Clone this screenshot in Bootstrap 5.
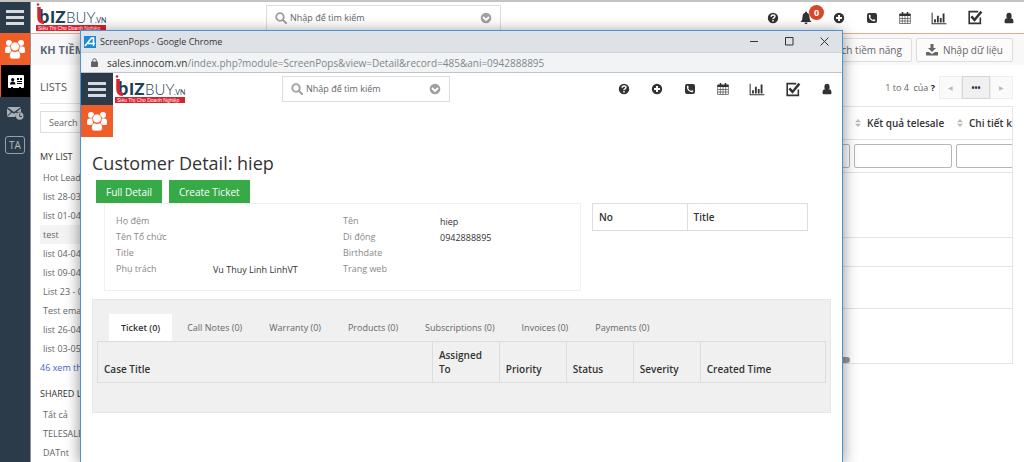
<!DOCTYPE html>
<html lang="vi">
<head>
<meta charset="utf-8">
<meta name="viewport" content="width=device-width, initial-scale=1">
<title>BizBuy CRM</title>
<link href="https://cdn.jsdelivr.net/npm/bootstrap@5.3.0/dist/css/bootstrap.min.css" rel="stylesheet">
<style>
  :root { --navy:#2c3b49; --brand:#ef5e29; --line:#e4e4e4; --ink:#333; --soft:#666; }
  body { font-family:"Open Sans","Noto Sans",sans-serif; font-size:9px; line-height:16px; color:var(--soft); background:#fff; }
  a { color:inherit; text-decoration:none; }
  button { font-family:inherit; }
  svg { display:block; flex:none; }
  .shell { border-top:2px solid #c4c4c4; }

  /* dark icon rail */
  .rail { width:31px; background:var(--navy); border-right:1px solid #8b949b; }
  .tile { height:32px; border:0; padding:0; background:var(--navy); color:#fff; display:flex; align-items:center; justify-content:center; }
  .rail .tile:first-child { height:31px; }
  .tile.is-brand { background:var(--brand); }
  .tile.is-current { background:#000; border-left:1px solid var(--brand); }
  .tile.is-dim { color:#a9b1b8; }
  .ta-box { width:20px; height:18px; border:1px solid #96a0a8; border-radius:3px; line-height:16px; font-size:10px; color:#b6bdc3; text-align:center; }

  /* application bar */
  .appbar { height:32px; }
  .appbar.is-main { border-bottom:1px solid #f5a48a; }
  .logo-slot { width:235px; padding-left:4px; }
  .pop .logo-slot { width:169px; padding-left:1px; }
  .finder { width:235px; height:26px; border:1px solid #ddd; padding:0 8px; color:#a0a0a0; }
  .pop .finder { width:168px; }
  .finder input { font-size:9px; border:0; outline:0; background:none; min-width:0; color:#666; padding:0 0 0 3px; }
  .finder input::placeholder, .list-find::placeholder { color:#666; opacity:1; }
  .tools { gap:19px; color:var(--ink); padding-right:8px; }
  .tools a { position:relative; }
  .count { position:absolute; left:10px; top:-6px; width:15px; height:15px; border-radius:50%; background:#d9472b; color:#fff; font-size:9px; font-weight:700; line-height:15px; text-align:center; }

  .module-bar { height:31px; background:#f8f8f8; padding:0 11px 0 9px; }
  .module-bar h1 { font-size:11px; font-weight:700; color:#5d6b78; margin:0; }
  .act { height:24px; border:1px solid #ddd; border-radius:2px; background:#fbfbfb; color:#666; font-size:10px; line-height:16px; padding:0 9px; gap:5px; }

  /* lists panel */
  .lists { width:208px; padding:0 9px; flex:none; }
  .lists h2 { font-size:11px; line-height:32px; padding-top:6px; margin:0 0 7px; border-bottom:1px solid var(--line); color:#555; }
  .list-find { height:22px; width:100%; border:1px solid #ddd; padding:0 8px; font-size:9px; }
  .lists h3 { font-size:9px; line-height:16px; margin:0 0 3px; color:var(--ink); }
  .lists li a { display:block; line-height:19px; padding-left:3px; }
  .lists li a.is-on { background:#f3f3f3; }
  .more { color:#4a5fc8; line-height:20px; }

  .pager { padding:11px 11px 7px 0; }
  .pager button { width:23px; height:23px; border:1px solid #eee; background:#fafafa; color:#bbb; padding:0; font-size:6px; line-height:8px; }
  .pager button.is-mid { width:28px; background:#f0f0f0; border-color:#d5d5d5; color:#333; font-size:8px; font-weight:700; }
  .sheet { border:1px solid var(--line); overflow:hidden; margin-right:11px; }
  .sheet table { width:816px; table-layout:fixed; border-collapse:collapse; }
  .sheet th { height:32px; padding:0 0 0 3px; font-weight:600; font-size:10px; color:var(--ink); white-space:nowrap; overflow:hidden; }
  .sheet th div { gap:6px; }
  .sheet td { padding:0 2px; border-top:1px solid var(--line); }
  .sheet td input { width:98px; height:24px; border:1px solid #b5b5b5; border-radius:2px; display:block; }
  .thumb { height:6px; width:79%; background:#999; border-radius:3px; }

  /* pop-up browser window */
  .pop { position:absolute; left:80px; right:181px; top:30px; bottom:0; background:#fff; border:1px solid #4795d8; border-bottom:0; box-shadow:0 2px 14px rgba(0,0,0,.45); }
  .pop-title { height:22px; background:#dee1e6; color:#333; border-bottom:1px solid #cfd2d6; padding:0 13px 0 3px; }
  .pop-title button { border:0; background:none; padding:0; color:#333; }
  .pop-url { height:20px; background:#f1f3f4; border-bottom:1px solid #c2c4c6; color:#80868b; padding:0 10px; gap:9px; font-size:10px; }
  .pop-url b { font-weight:400; color:#333; }
  .pop-tiles { width:32px; }
  .pop-body { padding:0 11px; margin-top:14px; }
  .pop-body h1 { font-size:18px; line-height:24px; color:var(--ink); font-weight:400; margin:0 0 5px; }
  .deeds { gap:7px; margin-left:4px; }
  .go { height:23px; background:#35aa47; border:0; color:#fff; font-size:10px; line-height:16px; padding:0 10px; }
  .facts { width:477px; height:88px; border:1px solid #f0f0f0; margin:0 11px 0 12px; padding:9px 11px; color:#888; }
  .facts dl { display:grid; margin:0; align-content:start; grid-auto-rows:16px; }
  .facts dl.is-left { grid-template-columns:97px 1fr; width:227px; }
  .facts dl.is-right { grid-template-columns:97px 1fr; }
  .facts dt { font-weight:400; }
  .facts dd { margin:0; color:var(--ink); padding-top:1px; }
  .grid-head { border-collapse:collapse; font-size:10px; }
  .grid-head th { border:1px solid #ddd; font-weight:600; color:var(--ink); padding:5px 6px; vertical-align:bottom; line-height:14px; }
  .brief { width:216px; }
  .brief th { height:27px; vertical-align:middle; }
  .related { background:#f0f0f0; border:1px solid #e6e6e6; height:114px; padding:14px 4px 0; margin-top:8px; }
  .related .nav { padding:0 12px; }
  .related .nav-link { color:#666; font-size:9px; line-height:16px; padding:6px 12px 5px; border:0; border-radius:0; margin-right:3px; }
  .related .nav-link.active { background:#fff; color:var(--ink); font-weight:600; }
  .related table { width:100%; table-layout:fixed; }
  .related th { height:41px; padding:6px; }
</style>
</head>
<body>
<svg width="0" height="0" class="position-absolute" aria-hidden="true">
  <symbol id="i-bars" viewBox="0 0 18 15"><path fill="#d9dcdf" d="M0 0h18v3H0zM0 6h18v3H0zM0 12h18v3H0z"/></symbol>
  <symbol id="i-people" viewBox="0 0 20 20"><g fill="currentColor"><circle cx="4" cy="4" r="3"/><circle cx="16" cy="4" r="3"/><path d="M0 13V10Q0 7 3 7.500h3Q5 11 7 12.500Q5 13 4.500 14H2Q0 14 0 13zM20 13V10q0-3-3-2.500h-3q1 3.500-1 5q2 .5 2.500 1.500H18q2 0 2-1z"/></g><g fill="currentColor" stroke="#ef5e29" stroke-width=".8"><path d="M4.500 17q0-5 3-5q2.500 1.500 5 0q3 0 3 5q0 3-2.500 3H7q-2.500 0-2.500-3z"/><circle cx="10" cy="7.500" r="4.500"/></g></symbol>
  <symbol id="i-card" viewBox="0 0 16 13"><path fill="#fff" d="M1 0h14q1 0 1 1v11q0 1-1 1h-2v-1h-2v1H5v-1H3v1H1q-1 0-1-1V1q0-1 1-1z"/><g fill="#000"><circle cx="4.700" cy="4.700" r="1.600"/><path d="M2 9.500q0-3 2.700-3t2.700 3zM9 3h2v2H9zM12 3h2v2h-2zM9 6h5v1H9zM9 8h5v1H9z"/></g></symbol>
  <symbol id="i-mail" viewBox="0 0 17 13"><path fill="currentColor" d="M0 0h14L7 5zM0 1.500L4 5 0 9zM5 5.500l2 1.300 2-1.300 1 .8a4.500 4.500 0 0 0-1.500 3.700H0zM14 1.500v3.500q-1.500-.5-3 .3L10 4.500z"/><circle cx="12.700" cy="9" r="3.800" fill="currentColor"/><path d="M12.700 6.500V9.500H15" stroke="#2c3b49" fill="none"/></symbol>
  <symbol id="i-search" viewBox="0 0 12 12"><circle cx="5" cy="5" r="3.800" fill="none" stroke="currentColor" stroke-width="1.800"/><path d="M8 8l3 3" stroke="currentColor" stroke-width="2" stroke-linecap="round"/></symbol>
  <symbol id="i-down" viewBox="0 0 12 12"><circle cx="6" cy="6" r="5.300" fill="currentColor"/><path d="M3 5l3 3 3-3" fill="none" stroke="#fff" stroke-width="1.800"/></symbol>
  <symbol id="i-help" viewBox="0 0 14 14"><circle cx="7" cy="7" r="5.200" fill="currentColor"/><path d="M5.200 5.800q0-1.900 1.900-1.900t1.800 1.600q0 .8-1 1.400t-.9 1.200M7 8.900v1.700" fill="none" stroke="#fff" stroke-width="1.500"/></symbol>
  <symbol id="i-bell" viewBox="0 0 14 14"><path fill="currentColor" d="M7 .5q1 0 1 1.200q2.500 .8 2.500 4.300q0 3.500 2 5h-11q2-1.500 2-5q0-3.500 2.500-4.300Q6 .5 7 .5zM5.500 11.500h3q0 1.700-1.500 1.700t-1.500-1.700z"/></symbol>
  <symbol id="i-plus" viewBox="0 0 14 14"><circle cx="7" cy="7" r="5.200" fill="currentColor"/><path d="M7 4v6M4 7h6" stroke="#fff" stroke-width="1.900"/></symbol>
  <symbol id="i-phone" viewBox="0 0 14 14"><rect x="2" y="2" width="10" height="10" rx="2" fill="currentColor"/><path d="M4.300 4.300q.2 4.800 5.300 5.500" fill="none" stroke="#fff" stroke-width="1.200"/><path d="M3.900 4.200l1-.6 1 1.600-.9.8zM8.200 8.900l.8-.8 1.500 1-.7 1z" fill="#fff"/></symbol>
  <symbol id="i-cal" viewBox="0 0 14 14"><path fill="currentColor" d="M2 2.500h10q.8 0 .8.800V5H1.200V3.300q0-.8.800-.8z"/><path d="M4.500 1v3M9.500 1v3" stroke="currentColor" stroke-width="1.500"/><path d="M1.600 5v7.500h10.800V5M4.300 5v7.500M7 5v7.500M9.700 5v7.500M1.600 7.500h10.800M1.600 10h10.800" fill="none" stroke="currentColor" stroke-width=".6"/></symbol>
  <symbol id="i-chart" viewBox="0 0 14 14"><path d="M1 2.500v9.500h12.500" fill="none" stroke="currentColor" stroke-width=".9"/><path d="M3.500 11V8M6 11V5M8.500 11V7M11 11V3" stroke="currentColor" stroke-width="1.600"/></symbol>
  <symbol id="i-check" viewBox="0 0 16 16"><path d="M11.500 2.500H3v11h10.500V8" fill="none" stroke="currentColor" stroke-width="1.500"/><path d="M5 7l3 3.300L14.500 2.500" fill="none" stroke="currentColor" stroke-width="2.300"/></symbol>
  <symbol id="i-user" viewBox="0 0 14 14"><ellipse cx="7" cy="5" rx="2.600" ry="3.200" fill="currentColor"/><path d="M2.500 11q0-3.800 2.300-3.800q2.200 1.500 4.400 0q2.300 0 2.300 3.800q0 1.200-1.300 1.200H3.800q-1.300 0-1.300-1.200z" fill="currentColor"/></symbol>
  <symbol id="i-import" viewBox="0 0 12 12"><path fill="currentColor" d="M4.500 0h3v4H10L6 8 2 4h2.500zM0 8h3l3 2 3-2h3v3.500H0z"/></symbol>
  <symbol id="i-sort" viewBox="0 0 6 8"><path fill="#bbb" d="M3 0l3 3.300H0zM3 8l3-3.300H0z"/></symbol>
</svg>

<div class="shell d-flex vh-100 overflow-hidden">
  <nav class="rail d-flex flex-column flex-shrink-0" aria-label="Module">
    <button class="tile" type="button" aria-label="Menu"><svg width="18" height="15"><use href="#i-bars"/></svg></button>
    <a class="tile is-brand" href="#" aria-label="KH"><svg width="20" height="20"><use href="#i-people"/></svg></a>
    <a class="tile is-current" href="#" aria-label="Leads"><svg width="16" height="13"><use href="#i-card"/></svg></a>
    <a class="tile is-dim" href="#" aria-label="Mail"><svg width="17" height="13"><use href="#i-mail"/></svg></a>
    <a class="tile is-dim" href="#"><span class="ta-box">TA</span></a>
  </nav>

  <div class="flex-grow-1 d-flex flex-column" style="min-width:0">
    <header class="appbar is-main d-flex align-items-center flex-shrink-0">
      <a class="logo-slot" href="#" aria-label="BizBuy">
        <svg width="72" height="29" viewBox="0 0 72 29">
          <g font-family="Lato" fill="#1c4255"><text x="4" y="20" font-weight="900" font-size="18">b</text><text x="15" y="20" font-weight="900" font-size="17">IZ</text><text x="31" y="20" font-weight="300" font-size="15">BUY</text><text x="60" y="20" font-size="7">.VN</text></g>
          <path d="M4 4v10.500q0 4.500 5 5" fill="none" stroke="#d8232f" stroke-width="3.500"/><circle cx="3" cy="1.500" r="1.300" fill="#d8232f"/>
          <rect x="1" y="22" width="70" height="6" fill="#d8232f"/><text x="3" y="27" font-family="Liberation Sans" font-size="5" fill="#fff">Siêu Thị Cho Doanh Nghiệp</text>
        </svg>
      </a>
      <label class="finder d-flex align-items-center"><svg width="12" height="12"><use href="#i-search"/></svg><input class="flex-grow-1" type="text" placeholder="Nhập để tìm kiếm"><svg width="12" height="12"><use href="#i-down"/></svg></label>
      <div class="tools d-flex align-items-center ms-auto">
        <a href="#" aria-label="Help"><svg width="14" height="14"><use href="#i-help"/></svg></a>
        <a href="#" aria-label="Alerts"><svg width="14" height="14"><use href="#i-bell"/></svg><span class="count">0</span></a>
        <a href="#" aria-label="Add"><svg width="14" height="14"><use href="#i-plus"/></svg></a>
        <a href="#" aria-label="Phone"><svg width="14" height="14"><use href="#i-phone"/></svg></a>
        <a href="#" aria-label="Calendar"><svg width="14" height="14"><use href="#i-cal"/></svg></a>
        <a href="#" aria-label="Reports"><svg width="16" height="16"><use href="#i-chart"/></svg></a>
        <a href="#" aria-label="Tasks"><svg width="17" height="17"><use href="#i-check"/></svg></a>
        <a href="#" aria-label="User"><svg width="14" height="14"><use href="#i-user"/></svg></a>
      </div>
    </header>

    <div class="module-bar d-flex align-items-center flex-shrink-0">
      <h1>KH TIỀM NĂNG</h1>
      <div class="ms-auto d-flex gap-1">
        <button class="act" type="button">Thêm danh sách tiềm năng</button>
        <button class="act d-flex align-items-center" type="button"><svg width="12" height="12"><use href="#i-import"/></svg>Nhập dữ liệu</button>
      </div>
    </div>

    <div class="d-flex">
      <aside class="lists">
        <h2>LISTS</h2>
        <input class="list-find mb-3" type="text" placeholder="Search for list" aria-label="Search for list">
        <h3>MY LIST</h3>
        <ul class="list-unstyled mb-0">
          <li><a href="#">Hot Lead</a></li><li><a href="#">list 28-03</a></li><li><a href="#">list 01-04</a></li>
          <li><a class="is-on" href="#">test</a></li><li><a href="#">list 04-04</a></li><li><a href="#">list 09-04</a></li>
          <li><a href="#">List 23 - 04</a></li><li><a href="#">Test email</a></li><li><a href="#">list 26-04</a></li><li><a href="#">list 03-05</a></li>
        </ul>
        <a class="more d-block mb-2" href="#">46 xem thêm</a>
        <h3>SHARED LIST</h3>
        <ul class="list-unstyled mb-0">
          <li><a href="#">Tất cả</a></li><li><a href="#">TELESALE</a></li><li><a href="#">DATnt</a></li>
        </ul>
      </aside>

      <main class="flex-grow-1" style="min-width:0">
        <div class="pager d-flex align-items-center justify-content-end">
          <span class="me-1">1 to 4 &nbsp;của <b class="text-dark">?</b></span>
          <button type="button" aria-label="Previous">◀</button><button class="is-mid" type="button">•••</button><button type="button" aria-label="Next">▶</button>
        </div>
        <div class="sheet">
          <table>
            <thead><tr><th></th><th></th><th></th><th></th><th></th><th></th>
              <th><div class="d-flex align-items-center"><svg width="6" height="8"><use href="#i-sort"/></svg>Kết quả telesale</div></th>
              <th><div class="d-flex align-items-center"><svg width="6" height="8"><use href="#i-sort"/></svg>Chi tiết kết quả</div></th></tr></thead>
            <tbody>
              <tr style="height:33px"><td><input aria-label="1"></td><td><input aria-label="2"></td><td><input aria-label="3"></td><td><input aria-label="4"></td><td><input aria-label="5"></td><td><input aria-label="6"></td><td><input aria-label="Kết quả telesale"></td><td><input aria-label="Chi tiết"></td></tr>
              <tr style="height:65px"><td colspan="8"></td></tr>
              <tr style="height:29px"><td colspan="8"></td></tr>
              <tr style="height:42px"><td colspan="8"></td></tr>
              <tr style="height:49px"><td colspan="8"></td></tr>
            </tbody>
          </table>
          <div class="thumb"></div>
        </div>
      </main>
    </div>
  </div>
</div>

<section class="pop d-flex flex-column overflow-hidden" aria-label="ScreenPops">
  <div class="pop-title d-flex align-items-center flex-shrink-0">
    <svg width="12" height="12" class="me-1"><rect width="12" height="12" fill="#1c8ad0"/><path d="M1 10L7.500 2h2v8M4 7.500h7" fill="none" stroke="#fff" stroke-width="1.600"/></svg>
    <span>ScreenPops - Google Chrome</span>
    <span class="ms-auto d-flex align-items-center" style="gap:26px">
      <button type="button" aria-label="Minimize"><svg width="9" height="9"><path d="M0 4.500h8" stroke="#333"/></svg></button>
      <button type="button" aria-label="Maximize"><svg width="9" height="9"><path d="M.5 .5h7.500v7.500H.5z" fill="none" stroke="#333"/></svg></button>
      <button type="button" aria-label="Close"><svg width="9" height="9"><path d="M.5 .5l8 8M8.500 .5l-8 8" stroke="#333"/></svg></button>
    </span>
  </div>
  <div class="pop-url d-flex align-items-center flex-shrink-0">
    <svg width="7" height="9"><rect y="3.500" width="7" height="5.500" rx=".8" fill="#5f6368"/><path d="M1.700 4V2.500q0-1.800 1.800-1.800t1.800 1.800V4" fill="none" stroke="#5f6368"/></svg>
    <span><b>sales.innocom.vn</b>/index.php?module=ScreenPops&amp;view=Detail&amp;record=485&amp;ani=0942888895</span>
  </div>

  <div class="d-flex flex-shrink-0">
    <div class="pop-tiles d-flex flex-column">
      <button class="tile" type="button" aria-label="Menu"><svg width="18" height="15"><use href="#i-bars"/></svg></button>
      <a class="tile is-brand" href="#" aria-label="KH"><svg width="20" height="20"><use href="#i-people"/></svg></a>
    </div>
    <div class="flex-grow-1">
      <header class="appbar d-flex align-items-center">
        <a class="logo-slot" href="#" aria-label="BizBuy">
          <svg width="72" height="29" viewBox="0 0 72 29">
            <g font-family="Lato" fill="#1c4255"><text x="4" y="20" font-weight="900" font-size="18">b</text><text x="15" y="20" font-weight="900" font-size="17">IZ</text><text x="31" y="20" font-weight="300" font-size="15">BUY</text><text x="60" y="20" font-size="7">.VN</text></g>
            <path d="M4 4v10.500q0 4.500 5 5" fill="none" stroke="#d8232f" stroke-width="3.500"/><circle cx="3" cy="1.500" r="1.300" fill="#d8232f"/>
            <rect x="1" y="22" width="70" height="6" fill="#d8232f"/><text x="3" y="27" font-family="Liberation Sans" font-size="5" fill="#fff">Siêu Thị Cho Doanh Nghiệp</text>
          </svg>
        </a>
        <label class="finder d-flex align-items-center"><svg width="12" height="12"><use href="#i-search"/></svg><input class="flex-grow-1" type="text" placeholder="Nhập để tìm kiếm"><svg width="12" height="12"><use href="#i-down"/></svg></label>
        <div class="tools d-flex align-items-center ms-auto">
          <a href="#" aria-label="Help"><svg width="14" height="14"><use href="#i-help"/></svg></a>
          <a href="#" aria-label="Add"><svg width="14" height="14"><use href="#i-plus"/></svg></a>
          <a href="#" aria-label="Phone"><svg width="14" height="14"><use href="#i-phone"/></svg></a>
          <a href="#" aria-label="Calendar"><svg width="14" height="14"><use href="#i-cal"/></svg></a>
          <a href="#" aria-label="Reports"><svg width="16" height="16"><use href="#i-chart"/></svg></a>
          <a href="#" aria-label="Tasks"><svg width="17" height="17"><use href="#i-check"/></svg></a>
          <a href="#" aria-label="User"><svg width="14" height="14"><use href="#i-user"/></svg></a>
        </div>
      </header>
    </div>
  </div>

  <div class="pop-body">
    <h1>Customer Detail: hiep</h1>
    <div class="deeds d-flex"><button class="go" type="button">Full Detail</button><button class="go" type="button">Create Ticket</button></div>
    <div class="d-flex align-items-start">
      <div class="facts d-flex">
        <dl class="is-left"><dt>Họ đệm</dt><dd></dd><dt>Tên Tổ chức</dt><dd></dd><dt>Title</dt><dd></dd><dt>Phụ trách</dt><dd>Vu Thuy Linh LinhVT</dd></dl>
        <dl class="is-right"><dt>Tên</dt><dd>hiep</dd><dt>Di động</dt><dd>0942888895</dd><dt>Birthdate</dt><dd></dd><dt>Trang web</dt><dd></dd></dl>
      </div>
      <table class="grid-head brief flex-shrink-0"><thead><tr><th style="width:44%">No</th><th>Title</th></tr></thead></table>
    </div>
    <div class="related">
      <nav class="nav flex-nowrap text-nowrap" aria-label="Related">
        <a class="nav-link active" href="#">Ticket (0)</a><a class="nav-link" href="#">Call Notes (0)</a><a class="nav-link" href="#">Warranty (0)</a><a class="nav-link" href="#">Products (0)</a><a class="nav-link" href="#">Subscriptions (0)</a><a class="nav-link" href="#">Invoices (0)</a><a class="nav-link" href="#">Payments (0)</a>
      </nav>
      <table class="grid-head">
        <colgroup><col style="width:46%"><col style="width:9.200%"><col style="width:9.200%"><col style="width:9.200%"><col style="width:9.200%"><col></colgroup>
        <thead><tr><th>Case Title</th><th>Assigned To</th><th>Priority</th><th>Status</th><th>Severity</th><th>Created Time</th></tr></thead>
      </table>
    </div>
  </div>
</section>
<script src="https://cdn.jsdelivr.net/npm/bootstrap@5.3.0/dist/js/bootstrap.bundle.min.js"></script>
</body>
</html>
